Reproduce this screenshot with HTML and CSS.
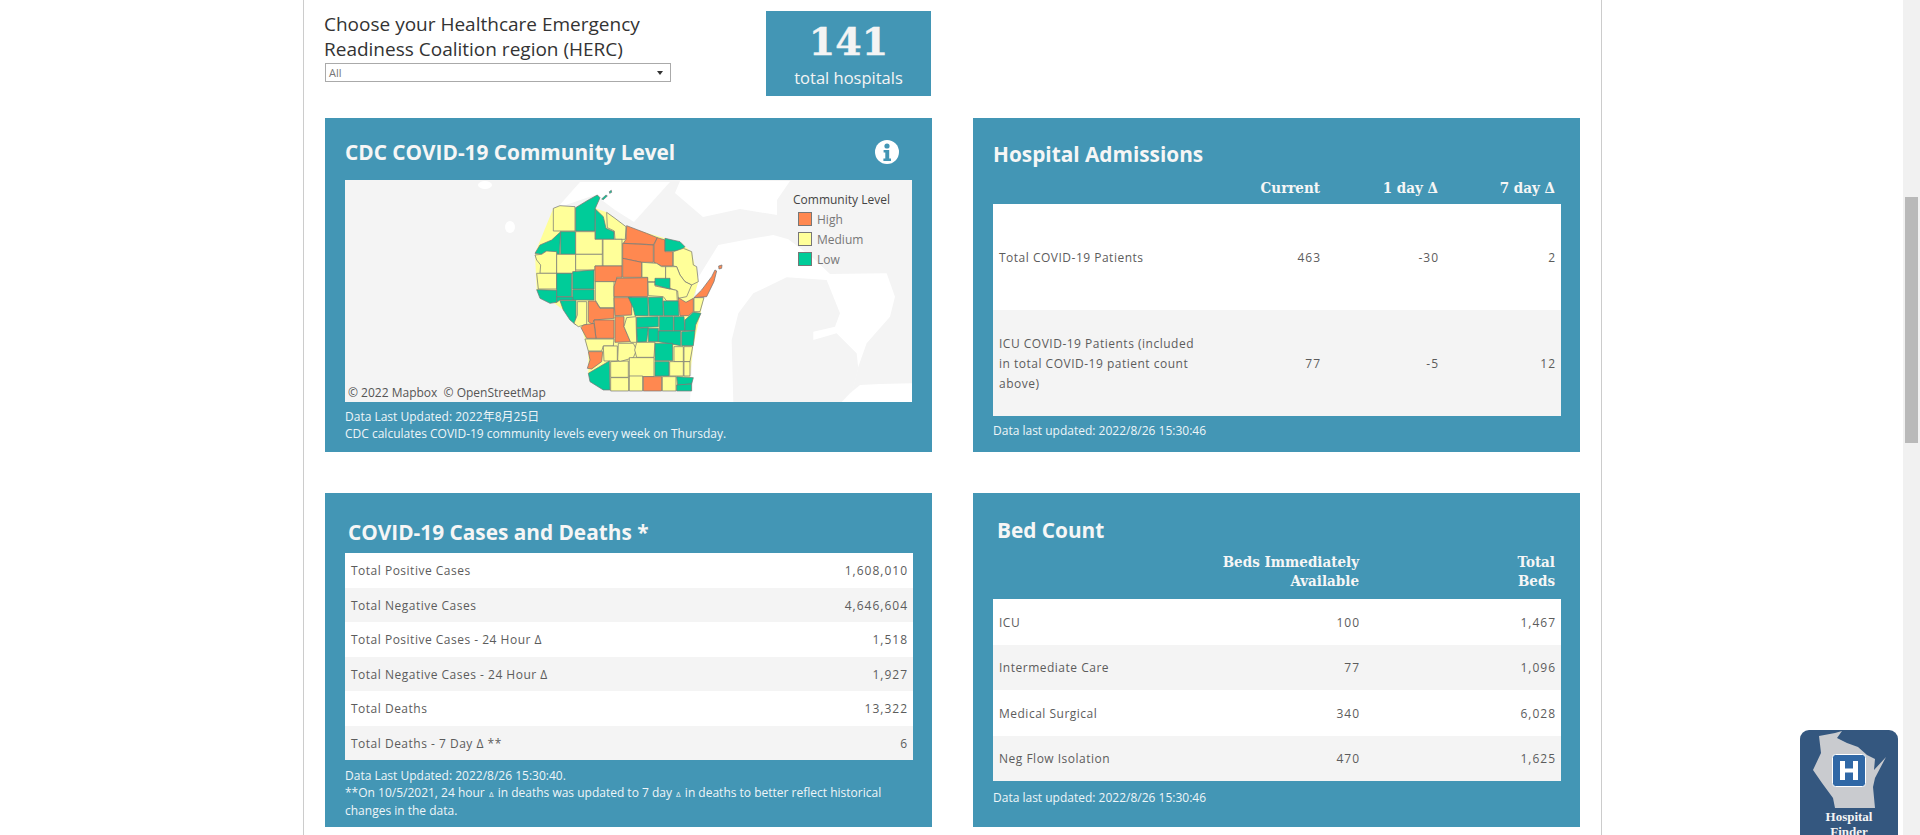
FILE: index.html
```html
<!DOCTYPE html>
<html>
<head>
  <title>Wisconsin COVID-19 Hospital Dashboard</title>
  <link rel="stylesheet" href="styles.css">
</head>
<body>
  <div class="window">
    <div class="content">
      <main class="page">
        <section class="top-row">
          <div class="top-left">
            <div class="filter">
              <div class="filter-label">Choose your Healthcare Emergency Readiness Coalition region (HERC)</div>
              <div class="select"><span>All</span><span class="select-arrow"></span></div>
            </div>
            <div class="stat">
              <div class="stat-number">141</div>
              <div class="stat-label">total hospitals</div>
            </div>
          </div>
        </section>

        <section class="cards">
          <article class="card card-map">
            <div class="card-head">
              <h2>CDC COVID-19 Community Level</h2>
              <svg class="info" viewBox="0 0 24 24">
                <circle cx="12" cy="12" r="12" fill="#fff"/>
                <circle cx="12" cy="6" r="2.6" fill="#4396b5"/>
                <path d="M8.6 10h5.6v8.6h1.8V21H8.4v-2.4h1.9v-6.2H8.6z" fill="#4396b5"/>
              </svg>
            </div>
            <div class="map">
              <svg class="map-svg" viewBox="0 0 567 222">
                <path class="lake" d="M235 2H325L289 42 270 30 250 15 212 28Z"/>
                <path class="lake" d="M335 1H445L432 20 432 35 395 29 358 37 330 13Z"/>
                <ellipse class="lake" cx="165" cy="47" rx="5" ry="6"/>
                <ellipse class="lake" cx="140" cy="5" rx="7" ry="4"/>
                <g transform="translate(315 0) scale(0.3333)">
                  <path class="lake" d="M90 666L110 300 175 195 265 178 340 165 385 178 460 235 510 282 680 280 705 350 690 410 620 490 595 560 570 666Z"/>
                  <path class="land" d="M220 666L215 480 235 400 280 340 380 292 500 300 540 400 525 440 460 455 460 480 530 460 590 520 595 566 570 666Z"/>
                  <path class="lake" d="M660 612L756 610V666H545L570 640 600 615Z"/>
                </g>
                <g class="counties" transform="translate(175 5) scale(0.3333)">
                  <polygon class="y state" points="100,70 167,68 232,30 240,38 226,70 260,82 318,125 435,160 495,185 515,200 535,290 520,340 552,338 520,482 510,573 515,618 250,615 205,565 205,500 185,430 130,375 50,314 45,205"/>
                  <polygon class="y" points="100,70 120,62 165,65 165,138 100,138"/>
                  <polygon class="g" points="167,68 205,45 232,30 240,38 226,70 225,138 167,138"/>
                  <polygon class="g" points="245,42 258,30 262,33 250,44"/>
                  <polygon class="g" points="268,20 274,16 275,22 269,25"/>
                  <polygon class="g" points="226,72 250,95 258,130 282,140 282,163 226,163"/>
                  <polygon class="y" points="260,82 285,100 318,125 316,163 285,163 283,138 262,128"/>
                  <polygon class="o" points="320,122 380,145 412,158 400,180 380,178 310,175 318,163"/>
                  <polygon class="o" points="308,175 400,180 400,232 365,232 308,220"/>
                  <polygon class="o" points="412,158 435,165 435,200 458,200 458,243 425,243 402,232 402,180"/>
                  <polygon class="g" points="435,160 480,170 495,185 480,198 435,198"/>
                  <polygon class="y" points="460,200 490,190 515,200 520,240 530,245 535,290 515,300 495,290 480,270 470,245 460,243"/>
                  <polygon class="g" points="45,205 60,180 95,165 122,140 118,208 75,200 65,208"/>
                  <polygon class="g" points="122,140 167,140 167,208 122,208"/>
                  <polygon class="y" points="167,140 225,140 225,163 247,163 247,208 167,208"/>
                  <polygon class="y" points="249,163 306,163 306,243 249,243"/>
                  <polygon class="y" points="45,210 65,208 80,198 110,200 110,265 60,265 62,240 50,225"/>
                  <polygon class="y" points="110,208 167,208 167,265 110,265"/>
                  <polygon class="y" points="167,208 247,208 247,243 225,243 225,255 167,255"/>
                  <polygon class="o" points="225,243 306,243 306,277 290,277 290,290 225,290"/>
                  <polygon class="o" points="308,220 365,232 365,277 308,277"/>
                  <polygon class="y" points="366,232 410,235 425,245 437,245 437,285 400,290 383,290 383,277 366,277"/>
                  <polygon class="y" points="437,245 470,245 480,270 495,290 515,300 500,335 475,340 473,318 450,310 437,285"/>
                  <polygon class="y" points="50,265 110,265 110,312 55,312"/>
                  <polygon class="g" points="50,314 110,316 110,352 90,355 60,340"/>
                  <polygon class="g" points="110,265 155,265 155,335 110,335"/>
                  <polygon class="g" points="158,260 222,255 222,312 158,312"/>
                  <polygon class="g" points="158,314 222,314 222,345 158,345"/>
                  <polygon class="g" points="110,336 158,336 158,345 120,345 110,352"/>
                  <polygon class="g" points="120,347 168,347 168,420 150,405 130,375"/>
                  <polygon class="y" points="172,350 200,350 200,418 175,425 162,415 172,390"/>
                  <polygon class="y" points="226,290 282,290 282,368 240,368 226,345"/>
                  <polygon class="o" points="290,280 383,278 383,335 282,335 282,305"/>
                  <polygon class="y" points="384,292 405,292 405,303 450,312 470,316 472,348 440,348 430,335 385,332"/>
                  <polygon class="g" points="405,280 450,280 450,312 405,300"/>
                  <polygon class="o" points="282,338 335,338 335,390 285,392"/>
                  <polygon class="g" points="325,337 383,337 385,392 345,392 340,370"/>
                  <polygon class="g" points="385,337 428,337 430,392 388,392"/>
                  <polygon class="g" points="430,348 475,348 477,392 432,392"/>
                  <polygon class="o" points="475,338 498,352 520,340 520,380 505,392 480,392"/>
                  <polygon class="y" points="522,338 552,338 540,380 522,380"/>
                  <polygon class="o" points="522,338 545,315 575,275 585,255 590,258 582,290 560,335"/>
                  <polygon class="o" points="596,243 606,240 605,250 597,252"/>
                  <polygon class="o" points="205,348 226,348 240,370 282,370 282,400 222,405 218,418 205,410"/>
                  <polygon class="o" points="222,405 282,405 282,460 228,460"/>
                  <polygon class="o" points="190,420 222,415 228,460 200,460 183,428"/>
                  <polygon class="o" points="285,395 312,395 312,425 332,470 285,472"/>
                  <polygon class="y" points="320,398 348,395 350,472 332,472 312,425"/>
                  <polygon class="g" points="350,397 415,395 415,425 350,428"/>
                  <polygon class="g" points="418,395 460,395 460,437 418,437"/>
                  <polygon class="g" points="462,395 492,395 495,437 462,437"/>
                  <polygon class="g" points="495,405 520,382 543,385 527,420 525,437 495,437"/>
                  <polygon class="g" points="350,430 385,428 380,470 352,472"/>
                  <polygon class="g" points="385,430 415,430 415,470 385,470"/>
                  <polygon class="g" points="415,438 482,438 482,482 415,470"/>
                  <polygon class="g" points="485,440 525,437 520,482 485,482"/>
                  <polygon class="y" points="195,462 282,462 280,483 250,483 245,498 205,498"/>
                  <polygon class="y" points="250,483 292,483 292,528 252,528"/>
                  <polygon class="y" points="295,475 340,475 350,495 340,518 300,530 293,525"/>
                  <polygon class="y" points="350,472 405,472 402,517 350,517 344,495"/>
                  <polygon class="g" points="405,475 458,475 458,527 405,527"/>
                  <polygon class="y" points="462,485 490,485 490,530 462,530"/>
                  <polygon class="y" points="492,485 518,485 510,530 492,530"/>
                  <polygon class="o" points="205,500 248,500 245,530 215,552 202,550 210,525"/>
                  <polygon class="y" points="272,530 325,528 325,577 272,577"/>
                  <polygon class="y" points="328,518 402,518 402,575 328,575"/>
                  <polygon class="g" points="405,530 447,530 447,573 405,573"/>
                  <polygon class="y" points="449,530 490,530 490,573 449,573"/>
                  <polygon class="y" points="492,530 510,530 510,573 492,573"/>
                  <polygon class="g" points="205,565 268,528 270,615 250,615 210,590"/>
                  <polygon class="y" points="272,578 326,578 326,618 272,618"/>
                  <polygon class="y" points="328,573 368,573 368,618 328,618"/>
                  <polygon class="o" points="370,575 425,575 425,618 370,618"/>
                  <polygon class="y" points="427,575 468,575 468,618 427,618"/>
                  <polygon class="g" points="470,575 520,578 515,597 473,600"/>
                  <polygon class="g" points="470,600 515,597 515,618 470,618"/>
                </g>
              </svg>
              <div class="legend">
                <div class="legend-title">Community Level</div>
                <div class="legend-item"><span class="swatch swatch-high"></span>High</div>
                <div class="legend-item"><span class="swatch swatch-medium"></span>Medium</div>
                <div class="legend-item"><span class="swatch swatch-low"></span>Low</div>
              </div>
              <div class="attribution">© 2022 Mapbox &nbsp;© OpenStreetMap</div>
            </div>
            <p class="note">Data Last Updated: 2022年8月25日<br>CDC calculates COVID-19 community levels every week on Thursday.</p>
          </article>

          <article class="card card-admissions">
            <div class="card-head"><h2>Hospital Admissions</h2></div>
            <table class="data">
              <thead>
                <tr><th></th><th>Current</th><th>1 day Δ</th><th>7 day Δ</th></tr>
              </thead>
              <tbody>
                <tr><td class="label">Total COVID-19 Patients</td><td>463</td><td>-30</td><td>2</td></tr>
                <tr><td class="label">ICU COVID-19 Patients (included in total COVID-19 patient count above)</td><td>77</td><td>-5</td><td>12</td></tr>
              </tbody>
            </table>
            <p class="note">Data last updated: 2022/8/26 15:30:46</p>
          </article>

          <article class="card card-cases">
            <div class="card-head"><h2>COVID-19 Cases and Deaths *</h2></div>
            <table class="data">
              <tbody>
                <tr><td class="label">Total Positive Cases</td><td>1,608,010</td></tr>
                <tr><td class="label">Total Negative Cases</td><td>4,646,604</td></tr>
                <tr><td class="label">Total Positive Cases - 24 Hour Δ</td><td>1,518</td></tr>
                <tr><td class="label">Total Negative Cases - 24 Hour Δ</td><td>1,927</td></tr>
                <tr><td class="label">Total Deaths</td><td>13,322</td></tr>
                <tr><td class="label">Total Deaths - 7 Day Δ **</td><td>6</td></tr>
              </tbody>
            </table>
            <p class="note">Data Last Updated: 2022/8/26 15:30:40.<br>**On 10/5/2021, 24 hour <span class="tiny">Δ</span> in deaths was updated to 7 day <span class="tiny">Δ</span> in deaths to better reflect historical changes in the data.</p>
          </article>

          <article class="card card-beds">
            <div class="card-head"><h2>Bed Count</h2></div>
            <table class="data">
              <thead>
                <tr><th></th><th>Beds Immediately<br>Available</th><th>Total<br>Beds</th></tr>
              </thead>
              <tbody>
                <tr><td class="label">ICU</td><td>100</td><td>1,467</td></tr>
                <tr><td class="label">Intermediate Care</td><td>77</td><td>1,096</td></tr>
                <tr><td class="label">Medical Surgical</td><td>340</td><td>6,028</td></tr>
                <tr><td class="label">Neg Flow Isolation</td><td>470</td><td>1,625</td></tr>
              </tbody>
            </table>
            <p class="note">Data last updated: 2022/8/26 15:30:46</p>
          </article>
        </section>
      </main>
    </div>
    <div class="scrollbar"><div class="thumb"></div></div>

    <div class="finder">
      <svg class="finder-svg" viewBox="0 0 98 78">
        <polygon fill="#c9cbcf" points="19,6 35,3 42,1 37,8 47,13 58,17 67,25 75,29 74,40 86,27 75,48 73,57 75,78 35,78 33,68 22,53 13,40 21,23"/>
        <rect x="32.500" y="24.500" width="33" height="32" rx="3" fill="#3068a6" stroke="#fff" stroke-width="1"/>
        <path d="M40 31h5v7.500h8V31h5v19h-5v-7.500h-8V50h-5z" fill="#fff"/>
      </svg>
      <div class="finder-label">Hospital<br>Finder</div>
    </div>
  </div>
</body>
</html>
```

FILE: styles.css
```css
body {
  margin: 0;
  background: #fff;
  font-family: "Open Sans", "Noto Sans CJK SC", sans-serif;
  color: #555;
}
.window {
  display: flex;
  position: relative;
  height: 835px;
  overflow: hidden;
}
.content {
  flex: 1;
  min-width: 0;
}
.page {
  box-sizing: border-box;
  width: 1299px;
  height: 835px;
  margin-left: 303px;
  padding: 11px 20px 0 21px;
  border-left: 1px solid #ccc;
  border-right: 1px solid #ccc;
}
.scrollbar {
  box-sizing: border-box;
  width: 17px;
  padding: 197px 2px 0;
  background: #f1f1f1;
}
.thumb {
  height: 246px;
  background: #b9b9b9;
}

/* top row */
.top-row {
  height: 107px;
}
.top-left {
  display: flex;
  justify-content: space-between;
  width: 606px;
}
.filter {
  width: 346px;
}
.filter-label {
  width: 340px;
  font-size: 19px;
  line-height: 25px;
  color: #333;
  margin: 1px 0 1px -1px;
}
.select {
  display: flex;
  justify-content: space-between;
  align-items: center;
  box-sizing: border-box;
  height: 19px;
  padding: 0 7px 0 3px;
  border: 1px solid #aaa;
  font-size: 11px;
  color: #777;
}
.select-arrow {
  width: 0;
  height: 0;
  border-left: 3px solid transparent;
  border-right: 3px solid transparent;
  border-top: 4px solid #333;
}
.stat {
  box-sizing: border-box;
  width: 165px;
  height: 85px;
  padding-top: 5px;
  background: #4396b5;
  color: #f4f4f4;
  text-align: center;
}
.stat-number {
  font-family: "DejaVu Serif", serif;
  font-weight: bold;
  font-size: 38px;
  line-height: 51px;
  -webkit-text-stroke: 0.4px #f4f4f4;
}
.stat-label {
  font-size: 16.500px;
  line-height: 22px;
}

/* cards */
.cards {
  display: grid;
  grid-template-columns: 607px 607px;
  grid-template-rows: 334px 334px;
  gap: 41px;
}
.card {
  display: flex;
  flex-direction: column;
  box-sizing: border-box;
  padding: 0 19px 0 20px;
  background: #4396b5;
  color: #fff;
}
.card-head {
  display: flex;
  justify-content: space-between;
  align-items: center;
  height: 50px;
  padding-top: 10px;
  box-sizing: border-box;
}
.card h2 {
  margin: 0;
  font-size: 20.800px;
  font-weight: bold;
  color: #f6f6f6;
}
.info {
  width: 24px;
  height: 24px;
  margin-right: 14px;
}
.note {
  margin: 0;
  font-size: 12px;
  line-height: 17px;
  color: #eef5f8;
}

/* map */
.card-map .card-head {
  height: 62px;
  padding-top: 6px;
}
.map {
  position: relative;
  width: 567px;
  height: 222px;
  background: #f4f4f4;
  margin-bottom: 6px;
  overflow: hidden;
}
.map-svg {
  display: block;
  width: 567px;
  height: 222px;
}
.lake {
  fill: #fff;
}
.land {
  fill: #f4f4f4;
}
.counties polygon {
  stroke: #777;
  stroke-width: 2.200;
}
.counties .state {
  stroke: none;
}
.y { fill: #ffff99; }
.o { fill: #ff8850; }
.g { fill: #00cc99; }
.legend {
  position: absolute;
  top: 11px;
  left: 448px;
  font-size: 12px;
  color: #444;
}
.legend-title {
  line-height: 18px;
}
.legend-item {
  display: flex;
  align-items: center;
  gap: 5px;
  height: 20px;
  padding-left: 5px;
  color: #777;
}
.swatch {
  box-sizing: border-box;
  width: 14px;
  height: 14px;
  border: 1px solid #777;
}
.swatch-high { background: #ff8850; }
.swatch-medium { background: #ffff99; }
.swatch-low { background: #00cc99; }
.attribution {
  position: absolute;
  left: 3px;
  bottom: 1px;
  font-size: 12px;
  line-height: 17px;
  color: #555;
}

/* tables */
.data {
  width: 568px;
  border-collapse: collapse;
  font-size: 12px;
  line-height: 20px;
  color: #5c5c5c;
  table-layout: fixed;
}
.data th {
  padding: 0 6px 0 0;
  font-family: "DejaVu Serif Condensed", "DejaVu Serif", serif;
  font-size: 15px;
  line-height: 19px;
  text-align: right;
  color: #f6f6f6;
}
.data td {
  padding: 2px 5px 0 0;
  text-align: right;
  letter-spacing: 1px;
}
.data .label {
  padding-left: 6px;
  text-align: left;
  letter-spacing: 0.500px;
}
.data tbody tr {
  background: #fff;
}
.data tbody tr:nth-child(even) {
  background: #f4f4f4;
}

.card-admissions .card-head {
  height: 57px;
  padding-top: 14px;
}
.card-admissions th {
  height: 27px;
  padding-bottom: 2px;
}
.card-admissions th:first-child {
  width: 225px;
}
.card-admissions th:nth-child(2) {
  width: 96px;
}
.card-admissions th:nth-child(3) {
  width: 112px;
}
.card-admissions .label {
  padding-right: 25px;
}
.card-admissions tbody tr {
  height: 106px;
}
.card-admissions .note {
  margin-top: 6px;
}

.card-cases {
  padding: 0 17px 0 20px;
}
.card-cases .card-head {
  height: 60px;
  padding: 18px 0 0 3px;
}
.card-cases tbody tr {
  height: 34.500px;
}
.card-cases .note {
  margin-top: 7px;
  width: 568px;
}
.tiny {
  font-size: 8px;
  margin: 0 1px;
}

.card-beds .card-head {
  height: 58px;
  padding: 16px 0 0 4px;
}
.card-beds th {
  height: 42px;
  padding-bottom: 6px;
}
.card-beds th:first-child {
  width: 169px;
}
.card-beds th:last-child {
  width: 190px;
}
.card-beds tbody tr {
  height: 45.500px;
}
.card-beds .note {
  margin-top: 8px;
}

/* hospital finder */
.finder {
  position: absolute;
  left: 1800px;
  top: 730px;
  box-sizing: border-box;
  width: 98px;
  height: 116px;
  border-radius: 9px;
  background: #34577f;
  overflow: hidden;
}
.finder-svg {
  display: block;
  width: 98px;
  height: 78px;
}
.finder-label {
  margin-top: 1px;
  font-family: "Liberation Serif", serif;
  font-weight: bold;
  font-size: 13px;
  line-height: 15px;
  text-align: center;
  color: #f4f4f4;
}
```
